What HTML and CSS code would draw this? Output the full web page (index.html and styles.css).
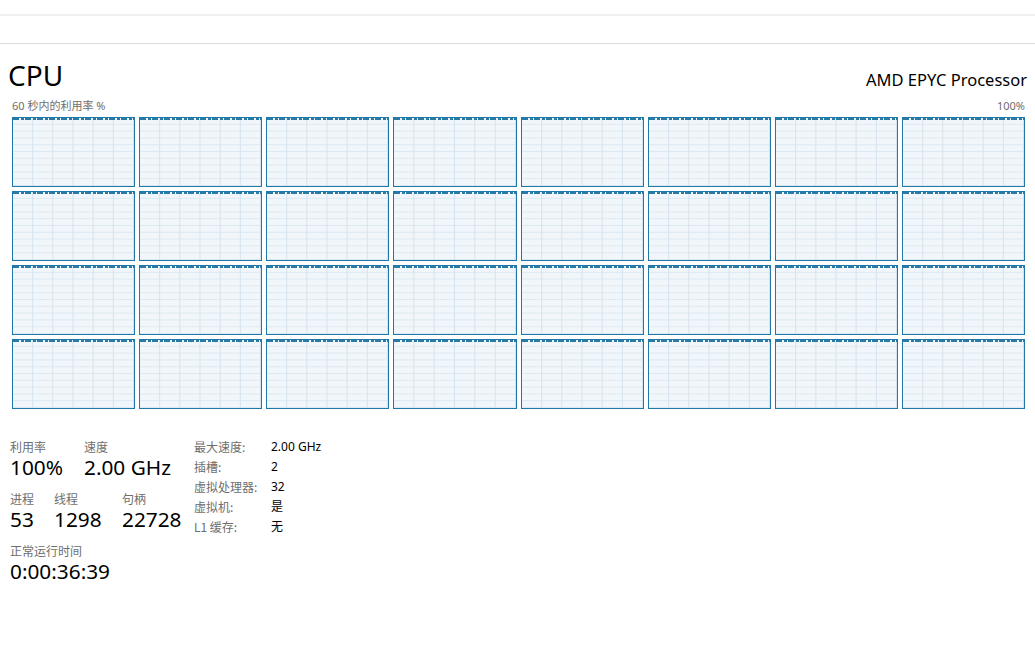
FILE: index.html
```html
<!DOCTYPE html>
<html lang="zh-CN">
<head>
<meta charset="utf-8">
<title>CPU</title>
<link rel="stylesheet" href="styles.css">
</head>
<body>
<div class="topbar"></div>
<main class="main">
  <div class="title-row">
    <div class="cpu">CPU</div>
    <div class="model">AMD EPYC Processor</div>
  </div>
  <div class="subrow">
    <span>60 秒内的利用率 %</span>
    <span>100%</span>
  </div>
  <div class="chart">
    <div class="cell"></div><div class="cell"></div><div class="cell"></div><div class="cell"></div>
    <div class="cell"></div><div class="cell"></div><div class="cell"></div><div class="cell"></div>
    <div class="cell"></div><div class="cell"></div><div class="cell"></div><div class="cell"></div>
    <div class="cell"></div><div class="cell"></div><div class="cell"></div><div class="cell"></div>
    <div class="cell"></div><div class="cell"></div><div class="cell"></div><div class="cell"></div>
    <div class="cell"></div><div class="cell"></div><div class="cell"></div><div class="cell"></div>
    <div class="cell"></div><div class="cell"></div><div class="cell"></div><div class="cell"></div>
    <div class="cell"></div><div class="cell"></div><div class="cell"></div><div class="cell"></div>
  </div>
  <div class="stats">
    <div class="dyn">
      <div class="srow">
        <div class="stat w74"><div class="lbl">利用率</div><div class="val">100%</div></div>
        <div class="stat"><div class="lbl">速度</div><div class="val">2.00 GHz</div></div>
      </div>
      <div class="srow">
        <div class="stat w44"><div class="lbl">进程</div><div class="val">53</div></div>
        <div class="stat w68"><div class="lbl">线程</div><div class="val">1298</div></div>
        <div class="stat"><div class="lbl">句柄</div><div class="val">22728</div></div>
      </div>
      <div class="srow">
        <div class="stat"><div class="lbl">正常运行时间</div><div class="val">0:00:36:39</div></div>
      </div>
    </div>
    <div class="spec">
      <div class="k">最大速度:</div><div class="v">2.00 GHz</div>
      <div class="k">插槽:</div><div class="v">2</div>
      <div class="k">虚拟处理器:</div><div class="v">32</div>
      <div class="k">虚拟机:</div><div class="v">是</div>
      <div class="k">L1 缓存:</div><div class="v">无</div>
    </div>
  </div>
</main>
</body>
</html>
```
FILE: styles.css
```css
html, body {
  margin: 0;
  padding: 0;
  background: #ffffff;
}
body {
  font-family: "Noto Sans", "Noto Sans CJK SC", sans-serif;
  color: #000000;
}
.topbar {
  margin-top: 14px;
  height: 27px;
  border-top: 2px solid #f0f0f0;
  border-bottom: 1px solid #dcdcdc;
}
.main {
  padding: 0 8px;
}
.title-row {
  display: flex;
  justify-content: space-between;
  align-items: baseline;
  margin-top: 15px;
  height: 32px;
}
.cpu {
  font-size: 28px;
  line-height: 32px;
}
.model {
  font-size: 16.5px;
  line-height: 20px;
}
.subrow {
  display: flex;
  justify-content: space-between;
  box-sizing: border-box;
  height: 26px;
  padding: 8px 2px 0 4px;
  font-size: 11px;
  line-height: 14px;
  color: #6e6e6e;
}
.chart {
  margin: 0 2px 0 4px;
  display: grid;
  grid-template-columns: repeat(8, 1fr);
  grid-template-rows: repeat(4, 70px);
  gap: 4px;
}
.cell {
  position: relative;
  border: 1px solid #1f78a8;
  background-color: #f1f6fa;
  background-image:
    linear-gradient(to right, transparent calc(100% - 1px), #d4e2ee calc(100% - 1px)),
    linear-gradient(to bottom, transparent calc(100% - 1px), #dce8f2 calc(100% - 1px));
  background-size: calc(100% / 6) 100%, 100% 10%;
}
.cell::before {
  content: "";
  position: absolute;
  left: 0;
  right: 0;
  top: 0;
  height: 2px;
  background: repeating-linear-gradient(90deg, #2a7aa8 0 6px, transparent 6px 8px, #2a7aa8 8px 11px, transparent 11px 12px);
}
.stats {
  display: flex;
  margin-top: 30px;
  padding-left: 2px;
}
.dyn {
  width: 184px;
}
.srow {
  display: flex;
  margin-bottom: 12px;
}
.w74 { width: 74px; }
.w44 { width: 44px; }
.w68 { width: 68px; }
.lbl {
  font-family: "Noto Sans CJK SC", sans-serif;
  font-size: 12px;
  line-height: 16px;
  height: 16px;
  color: #6e6e6e;
}
.val {
  margin-top: 1px;
  font-size: 20.8px;
  line-height: 23px;
  height: 23px;
  white-space: nowrap;
}
.spec {
  margin-top: -2px;
  display: grid;
  grid-template-columns: 77px auto;
  grid-auto-rows: 20px;
  align-content: start;
  font-size: 12px;
  line-height: 20px;
}
.k {
  font-family: "Noto Sans CJK SC", sans-serif;
  color: #6e6e6e;
}
.v {
  font-family: "Noto Sans", "Noto Sans CJK SC", sans-serif;
  color: #000000;
}
```
